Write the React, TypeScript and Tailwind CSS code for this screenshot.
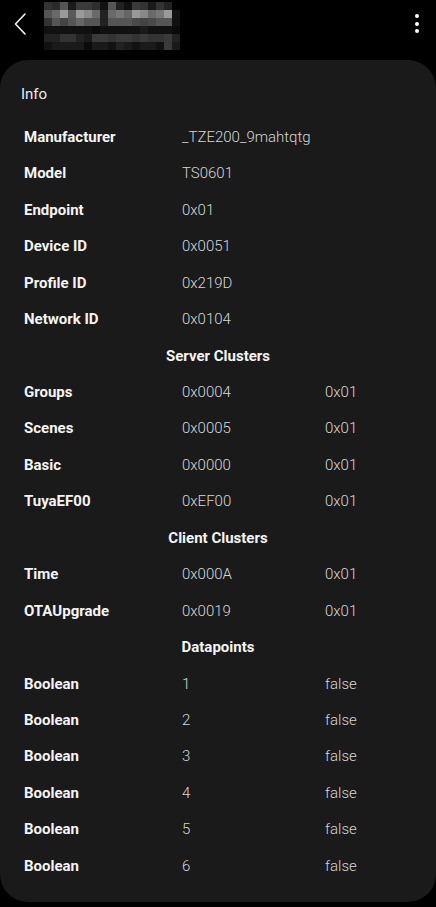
import type { ReactNode } from 'react'

type Row = { kind: 'row'; label: string; value: string; extra?: string } | { kind: 'section'; title: string }

const rows: Row[] = [
  { kind: 'row', label: 'Manufacturer', value: '_TZE200_9mahtqtg' },
  { kind: 'row', label: 'Model', value: 'TS0601' },
  { kind: 'row', label: 'Endpoint', value: '0x01' },
  { kind: 'row', label: 'Device ID', value: '0x0051' },
  { kind: 'row', label: 'Profile ID', value: '0x219D' },
  { kind: 'row', label: 'Network ID', value: '0x0104' },
  { kind: 'section', title: 'Server Clusters' },
  { kind: 'row', label: 'Groups', value: '0x0004', extra: '0x01' },
  { kind: 'row', label: 'Scenes', value: '0x0005', extra: '0x01' },
  { kind: 'row', label: 'Basic', value: '0x0000', extra: '0x01' },
  { kind: 'row', label: 'TuyaEF00', value: '0xEF00', extra: '0x01' },
  { kind: 'section', title: 'Client Clusters' },
  { kind: 'row', label: 'Time', value: '0x000A', extra: '0x01' },
  { kind: 'row', label: 'OTAUpgrade', value: '0x0019', extra: '0x01' },
  { kind: 'section', title: 'Datapoints' },
  { kind: 'row', label: 'Boolean', value: '1', extra: 'false' },
  { kind: 'row', label: 'Boolean', value: '2', extra: 'false' },
  { kind: 'row', label: 'Boolean', value: '3', extra: 'false' },
  { kind: 'row', label: 'Boolean', value: '4', extra: 'false' },
  { kind: 'row', label: 'Boolean', value: '5', extra: 'false' },
  { kind: 'row', label: 'Boolean', value: '6', extra: 'false' },
]

// pixelated (censored) device name, 8px cells
const mosaic = [
  ['333', '2a2a2a', '555', '1a1a1a', '3a3a3a', '3a3a3a', '2e2e2e', '111', '555', '222', '111', '3a3a3a', '333', '1a1a1a', '333', '222', '000'],
  ['555', '6a6a6a', '9a9a9a', '5a5a5a', '9a9a9a', '8a8a8a', '6a6a6a', '222', '6a6a6a', '777', '666', '999', '888', '6a6a6a', '777', '999', '111'],
  ['333', '555', '444', '555', '666', '555', '555', '222', '555', '555', '555', '4a4a4a', '444', '4a4a4a', '555', '555', '111'],
  ['111', '111', '111', '111', '111', '111', '0a0a0a', '111', '111', '111', '111', '111', '1a1a1a', '111', '111', '111', '0a0a0a'],
  ['222', '222', '333', '333', '222', '1a1a1a', '3a3a3a', '3a3a3a', '333', '3a3a3a', '3a3a3a', '333', '3a3a3a', '333', '333', '3a3a3a', '222'],
  ['111', '1a1a1a', '1a1a1a', '1a1a1a', '1a1a1a', '0a0a0a', '1a1a1a', '1a1a1a', '111', '222', '1a1a1a', '111', '1a1a1a', '1a1a1a', '111', '3a3a3a', '1a1a1a'],
]

function Mosaic() {
  return (
    <svg width="136" height="48" viewBox="0 0 136 48" aria-hidden>
      {mosaic.map((line, r) =>
        line.map((c, i) => <rect key={`${r}-${i}`} x={i * 8} y={r * 8} width="8" height="8" fill={`#${c}`} />),
      )}
    </svg>
  )
}

function Cell({ children, bold }: { children?: ReactNode; bold?: boolean }) {
  return (
    <span className={bold ? 'font-bold text-[#f4f4f4]' : 'font-light text-[#d6d6d6]'}>{children}</span>
  )
}

export default function App() {
  return (
    <div className="min-h-[907px] w-[436px] bg-black font-['Roboto','Liberation_Sans',sans-serif] text-[15px]">
      <header className="flex h-[60px] items-start">
        <button type="button" className="mt-[12px] ml-[12px] flex h-6 w-4 items-center justify-center">
          <svg width="12" height="22" viewBox="0 0 12 22" fill="none">
            <path d="M11 1 1.5 11 11 21" stroke="#f2f2f2" strokeWidth="1.6" strokeLinecap="round" strokeLinejoin="round" />
          </svg>
        </button>
        <div className="mt-[2px] ml-[16px]">
          <Mosaic />
        </div>
        <button type="button" className="mt-[14px] ml-auto mr-[17px] flex flex-col gap-[3.5px]">
          <span className="h-[4px] w-[4px] rounded-full bg-white" />
          <span className="h-[4px] w-[4px] rounded-full bg-white" />
          <span className="h-[4px] w-[4px] rounded-full bg-white" />
        </button>
      </header>

      <main className="mb-[5px] rounded-[28px] bg-[#1a1a1a] pb-[18px]">
        <h2 className="pt-[24px] pb-[15px] pl-[21px] text-[15px] leading-5 text-[#ececec]">Info</h2>
        {rows.map((row, i) =>
          row.kind === 'section' ? (
            <div key={i} className="flex h-[36.45px] items-center justify-center font-bold text-[#f4f4f4]">
              {row.title}
            </div>
          ) : (
            <div key={i} className="grid h-[36.45px] grid-cols-[158px_143px_1fr] items-center pl-6">
              <Cell bold>{row.label}</Cell>
              <Cell>{row.value}</Cell>
              <Cell>{row.extra}</Cell>
            </div>
          ),
        )}
      </main>
    </div>
  )
}
